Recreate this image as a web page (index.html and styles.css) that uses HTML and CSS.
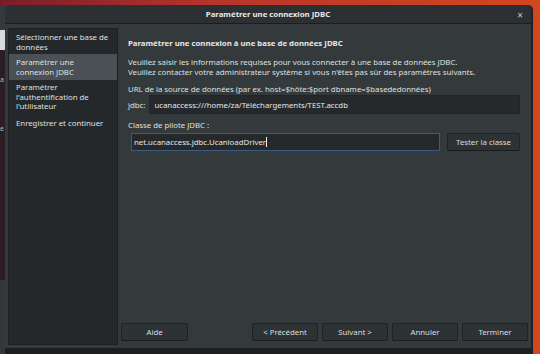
FILE: index.html
```html
<!DOCTYPE html>
<html lang="fr">
<head>
  <meta charset="UTF-8" />
  <title>Paramétrer une connexion JDBC</title>
  <link rel="stylesheet" href="styles.css">
</head>
<body>
  <div class="desktop">
    <!-- Window behind the dialog -->
    <div class="behind">
      <div class="behind-light"></div>
      <div class="behind-dark">
        <span>a</span>
        <span>e</span>
      </div>
      <div class="behind-grey"></div>
    </div>

    <div class="dialog">
      <div class="titlebar">
        <span class="title">Paramétrer une connexion JDBC</span>
        <span class="close">×</span>
      </div>

      <div class="dialog-body">
        <!-- Wizard steps -->
        <ul class="steps">
          <li>Sélectionner une base de données</li>
          <li class="active">Paramétrer une connexion JDBC</li>
          <li>Paramétrer l'authentification de l'utilisateur</li>
          <li>Enregistrer et continuer</li>
        </ul>

        <div class="main">
          <div class="page">
            <h1>Paramétrer une connexion à une base de données JDBC</h1>
            <p class="intro">Veuillez saisir les informations requises pour vous connecter à une base de données JDBC.<br>Veuillez contacter votre administrateur système si vous n'êtes pas sûr des paramètres suivants.</p>

            <div class="label">URL de la source de données (par ex. host=$hôte:$port dbname=$basededonnées)</div>
            <div class="url-row">
              <span>jdbc:</span>
              <div class="field">ucanaccess:///home/za/Téléchargements/TEST.accdb</div>
            </div>

            <div class="label">Classe de pilote JDBC :</div>
            <div class="class-row">
              <div class="field focused">net.ucanaccess.jdbc.UcanloadDriver<span class="caret"></span></div>
              <button class="btn">Tester la classe</button>
            </div>
          </div>

          <div class="buttons">
            <button class="btn">Aide</button>
            <div class="spacer"></div>
            <button class="btn">&lt; Précédent</button>
            <button class="btn">Suivant &gt;</button>
            <button class="btn">Annuler</button>
            <button class="btn">Terminer</button>
          </div>
        </div>
      </div>
    </div>
  </div>
</body>
</html>
```

FILE: styles.css
```css
* { box-sizing: border-box; }
body {
  margin: 0;
  width: 540px;
  height: 354px;
  overflow: hidden;
  font-family: 'Noto Sans', 'Open Sans', sans-serif;
  font-size: 7.8px;
  color: #dfe1e0;
  background: linear-gradient(90deg, #7a1d2a 0%, #b8352a 40%, #d2471f 100%);
}

.desktop {
  display: flex;
  height: 354px;
  padding-top: 5px;
}

.behind {
  width: 5px;
  display: flex;
  flex-direction: column;
  padding-top: 25px;
  background: #35393b;
}
.behind-light { height: 20px; background: #d9d9d9; }
.behind-dark {
  height: 230px;
  background: #2b1c25;
  display: flex;
  flex-direction: column;
  gap: 40px;
  padding-top: 25px;
  color: #b9b9b9;
  font-size: 7px;
  overflow: hidden;
}
.behind-grey { flex: 1; background: #333739; }

.dialog {
  width: 528px;
  height: 349px;
  display: flex;
  flex-direction: column;
  background: #34393b;
  border-radius: 5px 5px 0 0;
  border-right: 2px solid #1f2224;
  border-bottom: 6px solid #1c1f20;
}

.titlebar {
  height: 19px;
  flex-shrink: 0;
  display: flex;
  align-items: center;
  justify-content: center;
  position: relative;
  background: #2c3032;
  border-bottom: 1px solid #1b1d1e;
  border-radius: 5px 5px 0 0;
}
.title {
  font-weight: bold;
  color: #e8e8e7;
}
.close {
  position: absolute;
  right: 8px;
  top: 3px;
  font-size: 10px;
  color: #c9cbcb;
}

.dialog-body {
  flex: 1;
  display: flex;
  padding: 4px 0 3px 3px;
}

.steps {
  list-style: none;
  margin: 0;
  padding: 2px 0;
  width: 110px;
  background: #24282a;
  border: 1px solid #1d2022;
}
.steps li {
  padding: 2px 6px 2px 7px;
  line-height: 9.5px;
}
.steps li.active {
  background: #4a5053;
  padding: 4px 6px 3px 7px;
}
.steps li.active + li { padding-top: 3px; }
.steps li:last-child { padding-top: 5px; }

.main {
  flex: 1;
  display: flex;
  flex-direction: column;
  padding: 10px 3px 4px 3px;
}
.page {
  flex: 1;
  padding: 0 8px 0 7px;
}

h1 {
  margin: 0 0 9px;
  font-size: 7.8px;
  line-height: 10px;
  font-weight: bold;
  color: #e7e8e8;
}
.intro {
  margin: 0 0 7px;
  line-height: 10px;
}
.label {
  line-height: 10px;
  margin-bottom: 1px;
}

.url-row {
  display: flex;
  align-items: center;
  gap: 4px;
  margin-bottom: 6px;
}
.field {
  flex: 1;
  height: 19px;
  display: flex;
  align-items: center;
  padding: 0 4px;
  background: #26292b;
  border: 1px solid #222527;
  color: #e6e7e7;
}
.class-row {
  display: flex;
  gap: 7px;
  margin-top: 3px;
}
.field.focused {
  height: 18px;
  border-color: #3b5b82;
  margin-left: 3px;
  padding-left: 2px;
}
.caret {
  width: 1px;
  height: 10px;
  background: #eee;
}

.btn {
  height: 18px;
  width: 73px;
  padding: 0;
  font-family: inherit;
  font-size: 7.8px;
  color: #dcdedd;
  background: #2d3234;
  border: 1px solid #202325;
  border-bottom-color: #191b1c;
  border-radius: 2px;
}
.buttons {
  display: flex;
  gap: 4px;
}
.buttons .btn { width: 66px; }
.buttons .btn:first-child { width: 67px; }
.spacer { flex: 1; }
```
